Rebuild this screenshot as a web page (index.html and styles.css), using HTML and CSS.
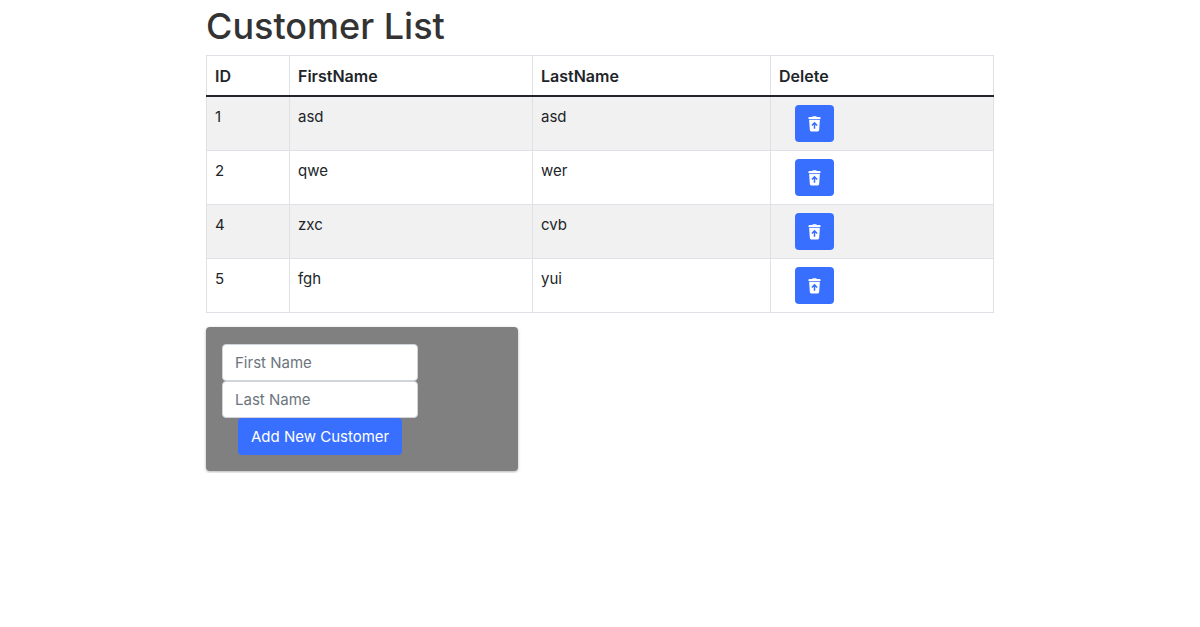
FILE: index.html
```html
<!DOCTYPE html>
<html lang="en">
<head>
<meta charset="utf-8">
<meta name="viewport" content="width=device-width, initial-scale=1">
<title>Customer List</title>
<link rel="stylesheet" href="styles.css">
</head>
<body>
<svg class="sprite" aria-hidden="true">
  <symbol id="restore-trash" viewBox="0 0 14 17">
    <path fill-rule="evenodd" d="M4.500 1L5.200.2H8.800L9.500 1H12.500C13.200 1 13.500 1.300 13.500 2V3H.5V2C.5 1.300.8 1 1.500 1zM1.200 4H12.800L12 15C11.900 16 11.400 16.500 10.500 16.500H3.500C2.600 16.500 2.100 16 2 15zM7 6L3.600 9.600L4.600 10.600L6.200 9.400V13.500H7.800V9.400L9.400 10.600L10.400 9.600z"/>
  </symbol>
</svg>
<main class="container">
  <h1 class="title">Customer List</h1>
  <table class="table">
    <colgroup><col class="col-id"><col class="col-first"><col class="col-last"><col></colgroup>
    <thead>
      <tr><th scope="col">ID</th><th scope="col">FirstName</th><th scope="col">LastName</th><th scope="col">Delete</th></tr>
    </thead>
    <tbody>
      <tr><td>1</td><td>asd</td><td>asd</td><td><button class="btn" type="button" aria-label="Delete asd asd"><svg class="icon"><use href="#restore-trash"/></svg></button></td></tr>
      <tr><td>2</td><td>qwe</td><td>wer</td><td><button class="btn" type="button" aria-label="Delete qwe wer"><svg class="icon"><use href="#restore-trash"/></svg></button></td></tr>
      <tr><td>4</td><td>zxc</td><td>cvb</td><td><button class="btn" type="button" aria-label="Delete zxc cvb"><svg class="icon"><use href="#restore-trash"/></svg></button></td></tr>
      <tr><td>5</td><td>fgh</td><td>yui</td><td><button class="btn" type="button" aria-label="Delete fgh yui"><svg class="icon"><use href="#restore-trash"/></svg></button></td></tr>
    </tbody>
  </table>
  <form class="card">
    <input class="field" type="text" placeholder="First Name" aria-label="First Name">
    <input class="field" type="text" placeholder="Last Name" aria-label="Last Name">
    <button class="btn" type="button">Add New Customer</button>
  </form>
</main>
</body>
</html>
```
FILE: styles.css
```css
*, *::before, *::after { box-sizing: border-box; }

body {
  margin: 0;
  background: #fff;
  color: #212529;
  font: 15px/24px Inter, "Liberation Sans", sans-serif;
}

.sprite { position: absolute; width: 0; height: 0; }

.container {
  max-width: 820px;
  margin: 0 auto;
  padding: 2px 16px;
}

.title {
  margin: 0 0 5px;
  color: #333;
  font-size: 36px;
  font-weight: 500;
  line-height: 48px;
}

.table {
  width: 100%;
  margin-bottom: 14px;
  border-collapse: collapse;
  table-layout: fixed;
}

.col-id { width: 83px; }
.col-first { width: 243px; }
.col-last { width: 238px; }

.table th,
.table td {
  padding: 8px;
  border: 1px solid #dee2e6;
  text-align: left;
  vertical-align: top;
}

.table th {
  padding-bottom: 7px;
  border-bottom: 2px solid #212529;
  font-size: 16px;
  font-weight: 600;
}

.table tbody tr:nth-child(odd) { background: #f1f1f1; }

.btn {
  display: block;
  height: 37px;
  margin: 0 16px;
  padding: 0 13px;
  border: 0;
  border-radius: 4px;
  background: #386fff;
  color: #fff;
  font: inherit;
}

.icon {
  display: block;
  width: 13px;
  height: 16px;
  fill: currentColor;
}

.card {
  width: 312px;
  max-width: 100%;
  padding: 17px 16px 16px;
  border-radius: 4px;
  background: #808080;
  box-shadow: 0 1px 3px rgba(0, 0, 0, 0.3);
}

.field {
  display: block;
  width: 196px;
  height: 37px;
  padding: 6px 12px;
  border: 1px solid #ced4da;
  border-radius: 4px;
  background: #fff;
  color: #495057;
  font: inherit;
}

.field::placeholder { color: #6c757d; opacity: 1; }
```
